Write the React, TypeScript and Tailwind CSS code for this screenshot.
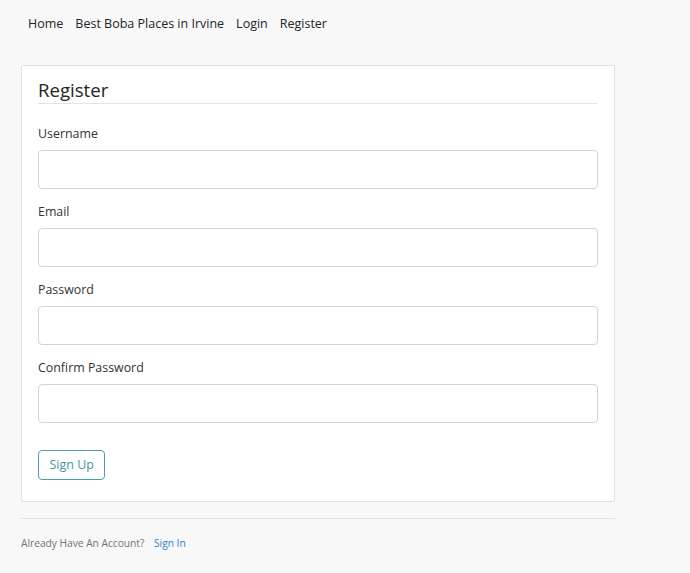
import React from "react";

const font = { fontFamily: '"Open Sans", "Noto Sans", sans-serif' };

function Field({ label, type = "text" }: { label: string; type?: string }) {
  return (
    <div className="mb-[12px]">
      <label className="block text-[12.4px] leading-[21px] text-[#333] mb-[6px]">{label}</label>
      <input
        type={type}
        className="block w-full h-[39px] rounded-[4px] border border-[#cfd4d9] bg-white px-3 outline-none"
      />
    </div>
  );
}

export default function App() {
  return (
    <div className="min-h-[573px] w-full bg-[#f8f8f8] text-[#212529]" style={font}>
      <nav className="h-[46px] pt-[2px] flex items-center pl-[28px] gap-[12px] text-[12.5px] text-[#212529]">
        <a>Home</a>
        <a>Best Boba Places in Irvine</a>
        <a>Login</a>
        <a>Register</a>
      </nav>
      <div className="ml-[21px] w-[594px] mt-[19px]">
        <div className="bg-white border border-[#dfdfdf] rounded-[2px] px-4 pt-[13px] pb-[21px]">
          <div className="text-[18.6px] leading-[22px] pb-[2px] text-[#212529] border-b border-[#e3e3e3] mb-[19px]">
            Register
          </div>
          <Field label="Username" />
          <Field label="Email" type="email" />
          <Field label="Password" type="password" />
          <Field label="Confirm Password" type="password" />
          <button className="mt-[15px] h-[30px] px-[10.5px] rounded-[4px] border border-[#4e9ea9] text-[#3f95a3] text-[12.5px] bg-white">
            Sign Up
          </button>
        </div>
        <div className="mt-[16px] border-t border-[#e2e2e2]" />
        <div className="pt-[17px] text-[10.2px] text-[#6c757d]">
          Already Have An Account? <a className="ml-[7px] text-[#2f7fcf]">Sign In</a>
        </div>
      </div>
    </div>
  );
}
